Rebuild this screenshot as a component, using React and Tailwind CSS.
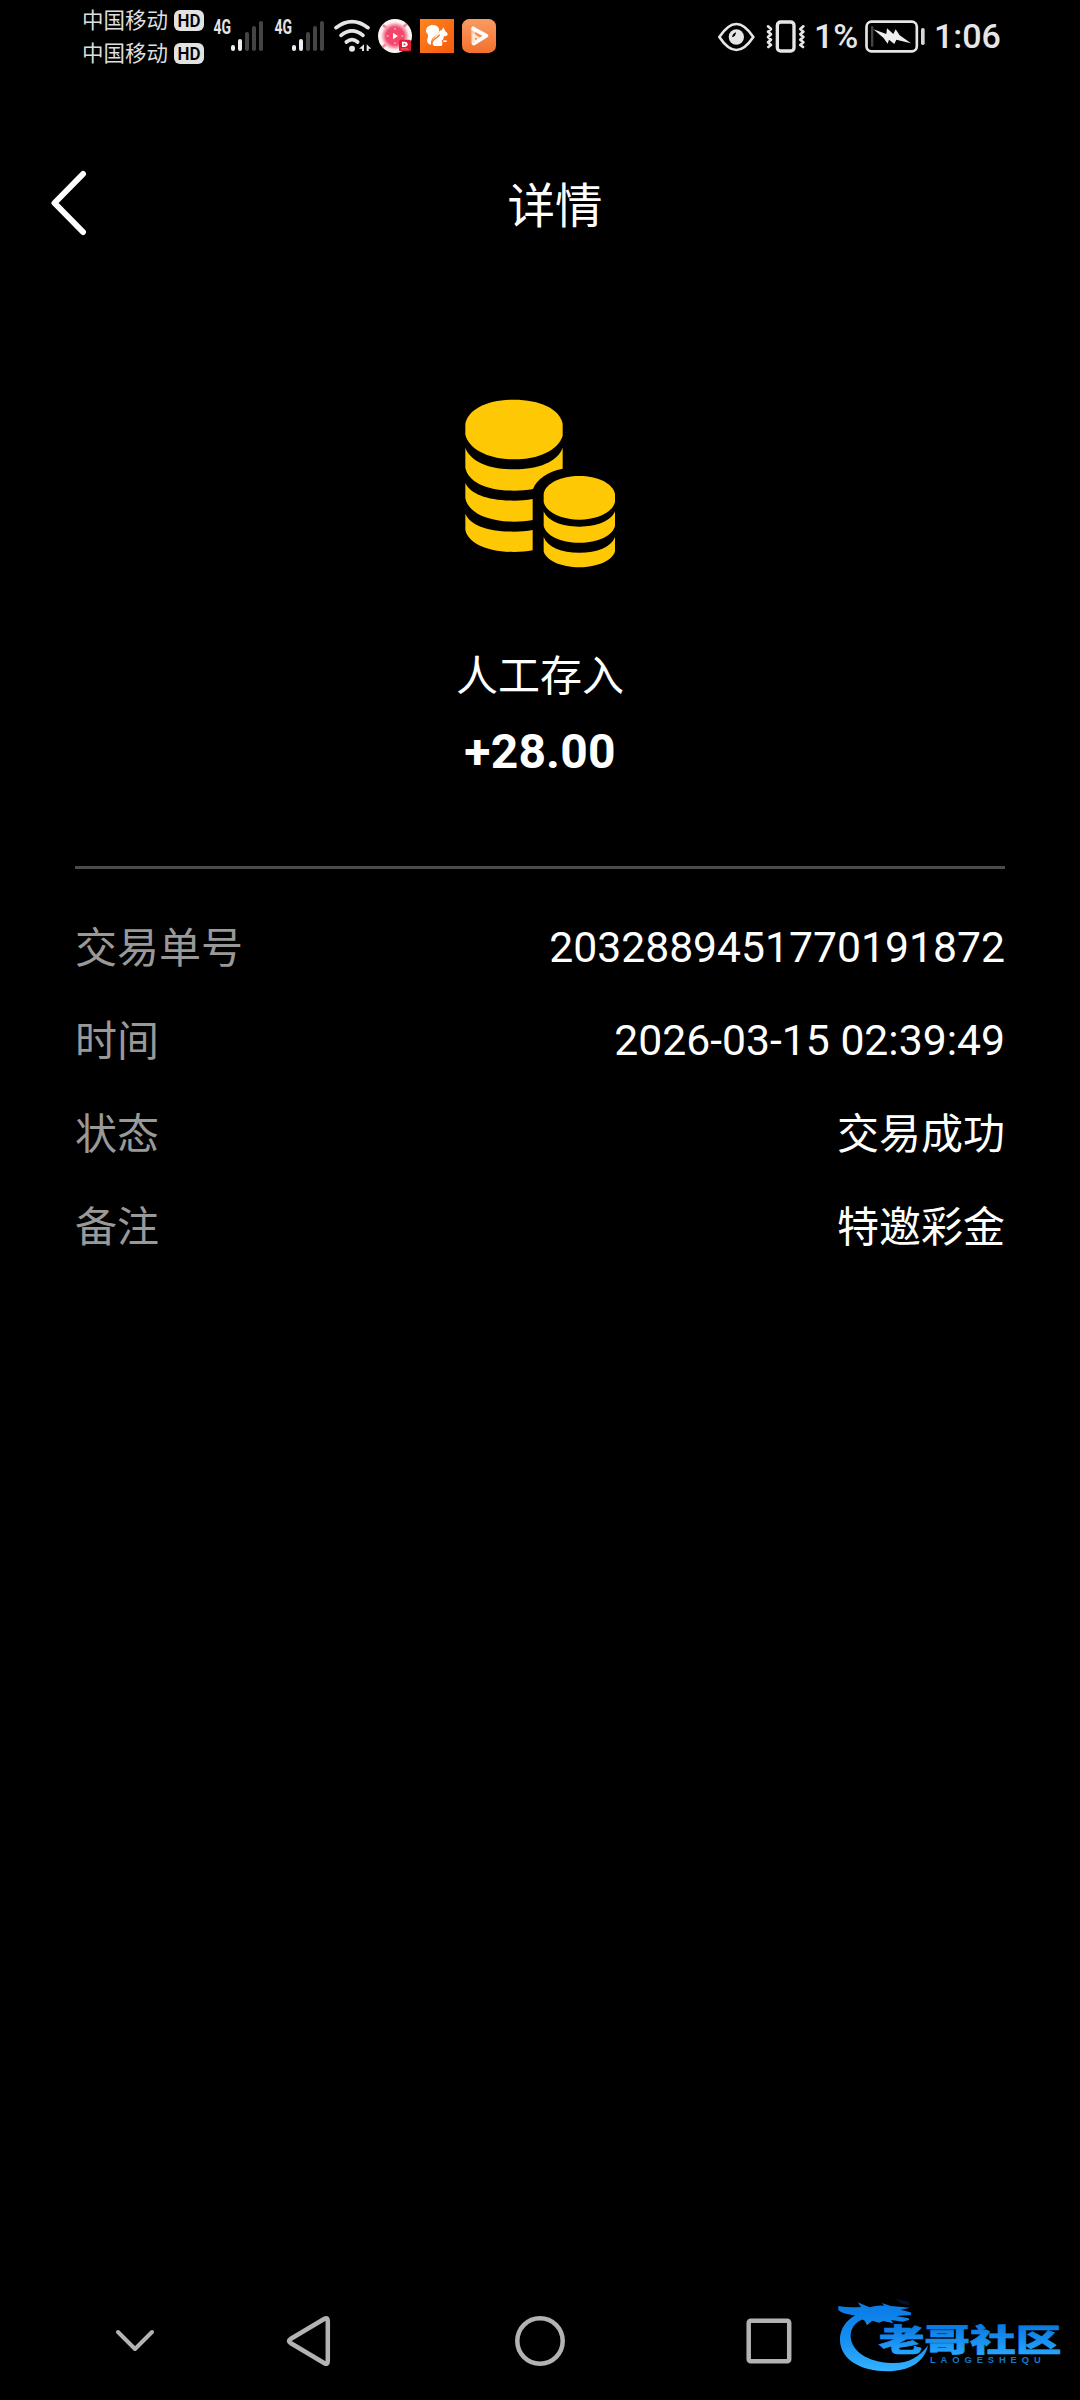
const CJK = "font-['Roboto','Noto_Sans_CJK_SC',sans-serif]";

const rows = [
  { label: "交易单号", value: "2032889451770191872", numeric: true },
  { label: "时间", value: "2026-03-15 02:39:49", numeric: true },
  { label: "状态", value: "交易成功" },
  { label: "备注", value: "特邀彩金" },
];

function Carrier() {
  return (
    <div className="flex h-[21px] items-center">
      <span className="w-[92px] text-[21.5px] leading-[21px] whitespace-nowrap text-[#dedede]">中国移动</span>
      <svg className="h-[21px] w-[30px]" viewBox="0 0 30 21">
        <rect width="30" height="21" rx="6" fill="#e2e2e2" />
        <text x="3.5" y="17" textLength="23" lengthAdjust="spacingAndGlyphs" fontFamily="Roboto, sans-serif" fontWeight="600" fontSize="18" fill="#000">HD</text>
      </svg>
    </div>
  );
}

function Signal() {
  return (
    <svg className="h-[40px] w-[52px]" viewBox="0 -4 52 40">
      <text x="0.5" y="16" textLength="17.5" lengthAdjust="spacingAndGlyphs" fontFamily="Roboto, sans-serif" fontWeight="700" fontSize="19.5" fill="#e4e4e4">4G</text>
      <g strokeWidth="4" strokeLinecap="round" stroke="#444">
        <path d="M20 29v2M27 23v8" stroke="#eee" />
        <path d="M34 16v15M41 10v21M48 5v26" />
      </g>
    </svg>
  );
}

function Wifi() {
  return (
    <svg className="h-[34px] w-[39px]" viewBox="0 0 117 102">
      <g fill="none" stroke="#e6e6e6" strokeWidth="11" strokeLinecap="round">
        <path d="M6 26Q54 -10 102 26" />
        <path d="M21 49Q54 22 87 49" />
        <path d="M37 69Q54 55 71 69" />
      </g>
      <circle cx="54" cy="89" r="9" fill="#e6e6e6" />
      <path d="M90 76v20h-6v-7h-9zM98 96V76l14 13h-8v7z" fill="#e6e6e6" />
    </svg>
  );
}

function RedApp() {
  return (
    <svg className="h-[34px] w-[34px]" viewBox="0 0 102 102">
      <defs>
        <radialGradient id="rose">
          <stop offset="0" stopColor="#ff3f66" />
          <stop offset=".52" stopColor="#f04a70" />
          <stop offset=".68" stopColor="#f7a0b0" />
          <stop offset=".82" stopColor="#fdeef0" />
          <stop offset="1" stopColor="#fff8f8" />
        </radialGradient>
      </defs>
      <circle cx="51" cy="51" r="51" fill="url(#rose)" />
      <path d="M15 19L26 26M76 24l10-9M14 84l10-8" stroke="#f58ba0" strokeWidth="8" />
      <g fill="#ffa0b4">
        <circle cx="51" cy="29" r="3" /><circle cx="29" cy="51" r="3" /><circle cx="73" cy="51" r="3" /><circle cx="51" cy="73" r="3" />
      </g>
      <path d="M45 42v19l15-10z" fill="#fff" />
      <rect x="63" y="62" width="36" height="35" rx="5" fill="#dc2035" />
      <path d="M72 68h8q9 1 9 8t-9 8h-8z" fill="#fff" />
      <path d="M69 89h22v2H69z" fill="#f19aa3" />
      <path d="M77 72v8l6-4z" fill="#dc2035" />
    </svg>
  );
}

function SquirrelApp() {
  return (
    <svg className="h-[34px] w-[34px]" viewBox="0 0 102 102">
      <defs>
        <linearGradient id="ember" x2="1" y2="1">
          <stop stopColor="#ff8420" /><stop offset="1" stopColor="#f45b0c" />
        </linearGradient>
      </defs>
      <rect width="102" height="102" fill="url(#ember)" />
      <path d="M18 39C17 24 28 18 38 18c17 0 25 14 16 25L38 58c-6 7-6 14-2 20-13-2-17-10-13-21 3-7 0-14-5-18z" fill="#fff" />
      <path d="M56 40q5-7 10-7l3-8q6 6 7 12 7 5 7 9-1 6-12 6c1 8-3 11-6 13q5 9-1 16H42c-9-8-6-21 2-26z" fill="#fff" />
      <path d="M34 79q2-16 16-23l9-9" fill="none" stroke="#fb701a" strokeWidth="4" />
      <rect x="70" y="64" width="10" height="5" fill="#fff" />
    </svg>
  );
}

function PlayApp() {
  return (
    <svg className="h-[34px] w-[34px]" viewBox="0 0 102 102">
      <defs>
        <linearGradient id="peach" x2="0" y2="1">
          <stop stopColor="#f99c62" /><stop offset="1" stopColor="#f2702d" />
        </linearGradient>
      </defs>
      <rect width="102" height="102" rx="22" fill="url(#peach)" />
      <g fill="none" strokeLinecap="round" strokeLinejoin="round" strokeWidth="12">
        <path d="M34 28V72" stroke="#fbc9ab" />
        <path d="M34 29L73 50L36 73" stroke="#fff" />
        <path d="M35 71V48L49 57" stroke="#fde7da" strokeWidth="8" />
      </g>
    </svg>
  );
}

function Eye() {
  return (
    <svg className="h-[30px] w-[37px]" viewBox="0 0 111 90">
      <path d="M4 45C22 18 38 6 55 6s33 12 51 39C88 72 72 84 55 84S22 72 4 45z" fill="none" stroke="#e6e6e6" strokeWidth="8" strokeLinejoin="round" />
      <circle cx="55" cy="45" r="23" fill="#e6e6e6" />
      <path d="M42 45q11 0 12-14-10 3-12 14z" fill="#000" />
    </svg>
  );
}

function Vibrate() {
  return (
    <svg className="h-[33px] w-[39px]" viewBox="0 0 117 99">
      <g fill="none" stroke="#e6e6e6" strokeWidth="8" strokeLinecap="round" strokeLinejoin="round">
        <rect x="34" y="6" width="50" height="87" rx="10" strokeWidth="10" />
        <path d="M6 19l9 8-9 8 9 8-9 8 9 8-9 8 9 8-8 6" />
        <path d="M112 19l-9 8 9 8-9 8 9 8-9 8 9 8-9 8 8 6" />
      </g>
    </svg>
  );
}

function Battery() {
  return (
    <svg className="h-[33px] w-[61px]" viewBox="0 0 183 99">
      <rect x="4.500" y="5" width="151" height="89" rx="15" fill="none" stroke="#e6e6e6" strokeWidth="8" />
      <rect x="18" y="18" width="7" height="62" rx="3" fill="#444" />
      <path d="M25 28L64 42 66 25 85 42 92 28 104 46 138 70 94 59 88 72 72 59 68 71 55 53z" fill="#eee" />
      <rect x="168" y="24" width="11" height="51" rx="5" fill="#d5d5d5" />
    </svg>
  );
}

function StatusBar() {
  return (
    <header className="flex h-[75px] shrink-0 items-start justify-between pr-[76px] pl-[82px]">
      <div className="flex items-start">
        <div className="flex flex-col gap-[12px] pt-[10px]">
          <Carrier />
          <Carrier />
        </div>
        <div className="flex gap-[9px] pt-[14px] pl-[9px]">
          <Signal />
          <Signal />
        </div>
        <div className="flex items-start pt-[19px] pl-[8px]">
          <Wifi />
          <div className="pl-[5px]"><RedApp /></div>
          <div className="pl-[8px]"><SquirrelApp /></div>
          <div className="pl-[8px]"><PlayApp /></div>
        </div>
      </div>
      <div className="flex items-center pt-[20px] text-[34px] font-medium whitespace-nowrap text-[#e6e6e6]">
        <Eye />
        <div className="pl-[11px]"><Vibrate /></div>
        <span className="w-[60px] pl-[9px] leading-[33px]">1%</span>
        <Battery />
        <span className="w-[78px] pl-[8px] leading-[33px]">1:06</span>
      </div>
    </header>
  );
}

function Coins() {
  return (
    <svg className="h-[200px] w-[200px]" viewBox="0 0 600 600" fill="#ffc805">
      <path d="M76 132C84 86 145 59 222 59s138 27 146 73v35c-14 44-73 71-146 71S88 210 76 164z" />
      <path d="M76 203c15 42 73 65 146 65s131-23 146-65v63c-46 9-78 32-89 61-18 4-36 5-57 5-80 0-137-25-146-69z" />
      <path d="M76 309c15 34 70 53 146 53 20 0 38-1 56-5v63c-17 3-36 5-56 5-78 0-138-27-146-70z" />
      <path d="M76 401c15 36 70 54 146 54 20 0 39-2 56-5v61c-17 4-36 5-56 5-78 0-138-26-146-67z" />
      <path d="M311 341c6-32 53-53 107-53s99 21 107 53v25c-8 32-53 53-107 53s-99-21-107-53z" />
      <path d="M311 394c12 29 53 46 107 46s95-17 107-46v43c-6 29-51 51-107 51s-101-22-107-51z" />
      <path d="M311 471c12 31 53 47 107 47s95-16 107-47v43c-6 27-53 48-107 48s-101-21-107-48z" />
    </svg>
  );
}

function Watermark() {
  return (
    <svg className="h-[110px] w-[260px]" viewBox="0 0 780 330">
      <defs>
        <linearGradient id="sea" gradientUnits="userSpaceOnUse" x1="0" y1="65" x2="0" y2="275">
          <stop stopColor="#087ae5" /><stop offset=".55" stopColor="#168ff0" /><stop offset="1" stopColor="#35b2ff" />
        </linearGradient>
        <linearGradient id="glyphs" gradientUnits="userSpaceOnUse" x1="0" y1="130" x2="0" y2="222">
          <stop stopColor="#0875df" /><stop offset="1" stopColor="#26a5fb" />
        </linearGradient>
      </defs>
      <path d="M143 92C88 104 58 140 60 184c4 54 60 90 142 90 64 0 112-27 122-78-29 40-66 56-110 53-72-3-118-35-122-78-2-30 20-52 62-62z" fill="url(#sea)" />
      <path d="M55 78q30 6 68 3l-10-14 36 15q22-7 44-5l-8-8 28 9 57 5-28 6 30 8 1 8-45 3 38 7 2 4-19 6-36-5 7 10-30-7-13 5-20-6-16 14-7-14-26-15-23-4q-22-5-30-13z" fill="url(#sea)" />
      <path d="M225 56q24 4 40 9l5 11-24-4" fill="#031226" />
      <text x="176" y="213" textLength="548" lengthAdjust="spacingAndGlyphs" fontFamily="'Noto Sans CJK SC', sans-serif" fontWeight="900" fontSize="92" fill="url(#glyphs)" stroke="url(#glyphs)" strokeWidth="2">老哥社区</text>
      <text x="330" y="250" textLength="332" fontFamily="'Liberation Sans', sans-serif" fontWeight="700" fontSize="28" fill="#1478c8">LAOGESHEQU</text>
    </svg>
  );
}

export default function App() {
  return (
    <div className={`relative flex h-[2400px] w-[1080px] flex-col overflow-hidden bg-black text-white ${CJK}`}>
      <StatusBar />
      <div className="flex h-[256px] items-start pt-[95px] pl-[50px]">
        <svg className="h-[66px] w-[38px]" viewBox="0 0 38 66" fill="none" stroke="#fff" strokeWidth="6" strokeLinecap="round" strokeLinejoin="round">
          <path d="M33 4L4.500 33L33 62" />
        </svg>
        <h1 className="w-[934px] pt-[13px] text-center text-[47.500px] leading-[48px]">详情</h1>
      </div>
      <main className="flex flex-col px-[75px] pt-[49px]">
        <section className="flex flex-col items-center">
          <Coins />
          <p className="mt-[72px] text-[42px] leading-[50px]">人工存入</p>
          <p className="mt-[22px] text-[48px] leading-[56px] font-bold tracking-[0.2px]">+28.00</p>
        </section>
        <div className="mt-[86px] h-[3px] bg-[#4b4b4b]" />
        <dl className="flex flex-col gap-[43px] pt-[55px]">
          {rows.map((row) => (
            <div key={row.label} className="flex h-[50px] items-center justify-between text-[42px] leading-[50px]">
              <dt className="text-[#999]">{row.label}</dt>
              <dd className={row.numeric ? "pb-[4px] text-[42.700px]" : ""}>{row.value}</dd>
            </div>
          ))}
        </dl>
      </main>
      <nav className="mt-auto flex h-[110px] shrink-0 items-start pl-[114px]">
        <svg className="mt-[37px] h-[28px] w-[42px]" viewBox="0 0 42 28" fill="none" stroke="#b3b3b3" strokeWidth="4" strokeLinecap="round" strokeLinejoin="round">
          <path d="M4 5L21 22L38 5" />
        </svg>
        <svg className="mt-[25px] ml-[130px] h-[52px] w-[46px]" viewBox="0 0 46 52" fill="none" stroke="#b3b3b3" strokeWidth="4.500" strokeLinejoin="round">
          <path d="M38.500 3.800Q41.800 2 41.800 6V46Q41.800 50 38.500 48.200L4.500 28Q1.500 26 4.500 24Z" />
        </svg>
        <svg className="mt-[25px] ml-[182px] h-[52px] w-[52px]" viewBox="0 0 52 52" fill="none" stroke="#b3b3b3" strokeWidth="4.500">
          <circle cx="26" cy="26" r="22.700" />
        </svg>
        <svg className="mt-[25px] ml-[178px] h-[52px] w-[50px]" viewBox="0 0 50 52" fill="none" stroke="#b3b3b3" strokeWidth="4.500">
          <rect x="4.700" y="5.700" width="40.500" height="40.500" rx="2" />
        </svg>
      </nav>
      <div className="pointer-events-none absolute top-[2280px] left-[820px]">
        <Watermark />
      </div>
    </div>
  );
}
